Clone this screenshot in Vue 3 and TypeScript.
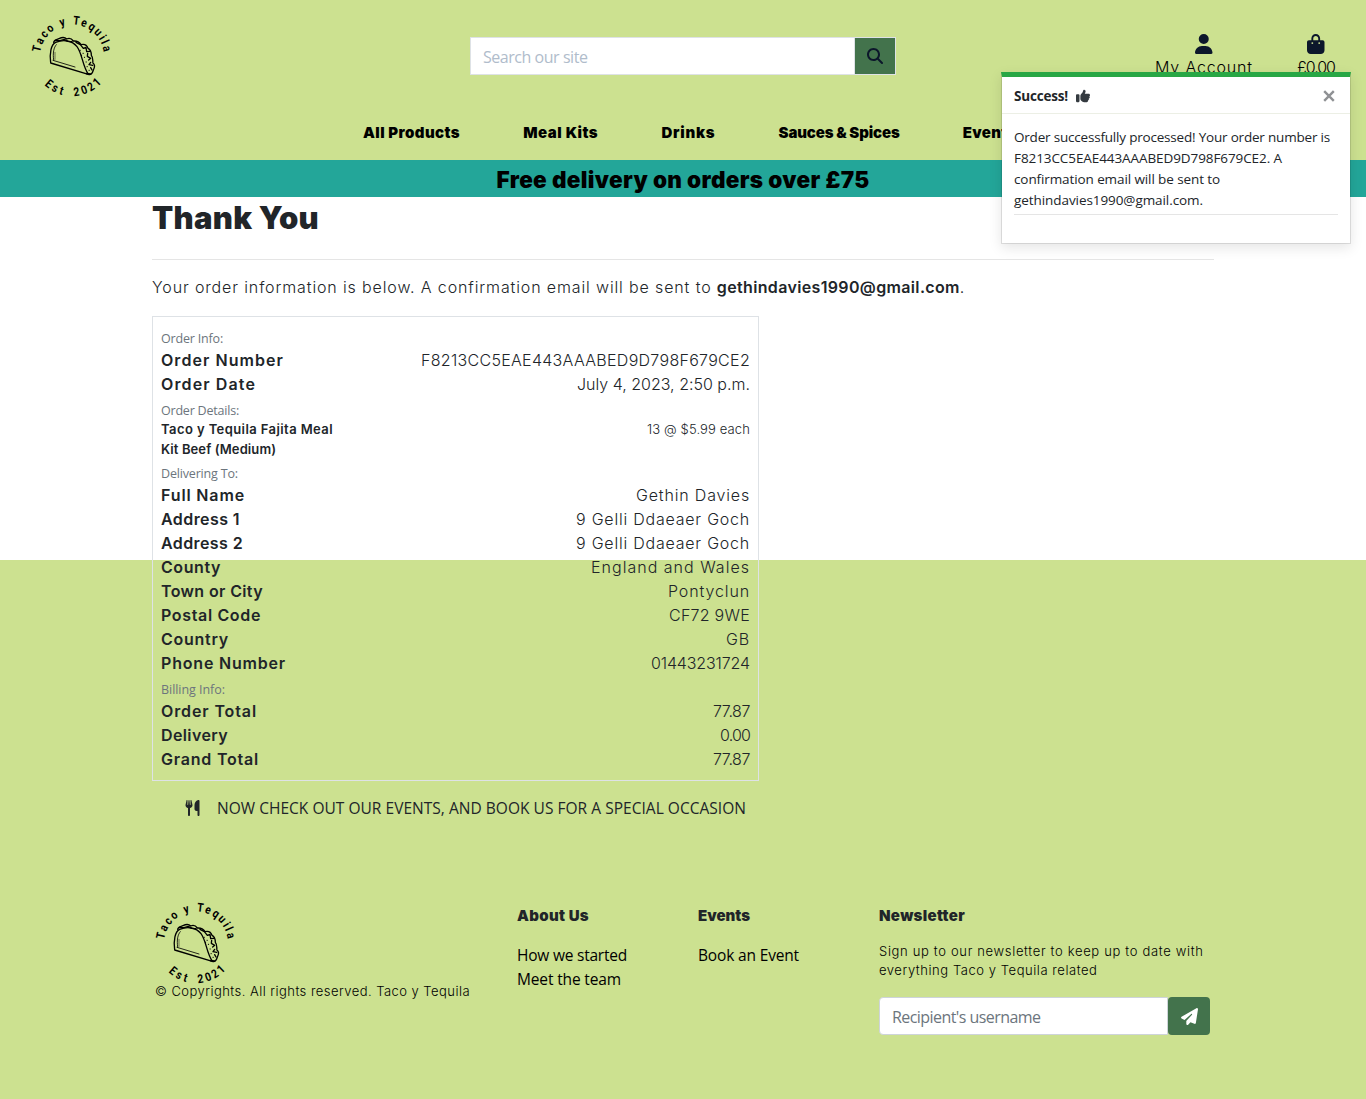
<script setup lang="ts">
import { h } from 'vue'
import type { Directive, VNode } from 'vue'

interface Row { label: string; lw: number; value: string; vw: number }
interface Section { title: string; tw: number; rows: Row[]; item?: boolean }

// Tracks a run of text out to a given measure by adjusting its letter spacing.
const vFit: Directive<HTMLElement, number> = {
  mounted(el, { value }) {
    const natural = el.getBoundingClientRect().width
    const count = (el.textContent ?? '').trim().length
    if (count) el.style.letterSpacing = `${(value - natural) / count}px`
  },
}

const nav = [
  { text: 'All Products', w: 97 },
  { text: 'Meal Kits', w: 75 },
  { text: 'Drinks', w: 54 },
  { text: 'Sauces & Spices', w: 121 },
  { text: 'Events', w: 54 },
]

const toastLines = [
  { text: 'Order successfully processed! Your order number is', w: 316 },
  { text: 'F8213CC5EAE443AAABED9D798F679CE2. A', w: 268 },
  { text: 'confirmation email will be sent to', w: 206 },
  { text: 'gethindavies1990@gmail.com.', w: 189 },
]

const sections: Section[] = [
  {
    title: 'Order Info:', tw: 62,
    rows: [
      { label: 'Order Number', lw: 123, value: 'F8213CC5EAE443AAABED9D798F679CE2', vw: 329 },
      { label: 'Order Date', lw: 95, value: 'July 4, 2023, 2:50 p.m.', vw: 173 },
    ],
  },
  { title: 'Order Details:', tw: 78, rows: [], item: true },
  {
    title: 'Delivering To:', tw: 77,
    rows: [
      { label: 'Full Name', lw: 84, value: 'Gethin Davies', vw: 114 },
      { label: 'Address 1', lw: 79, value: '9 Gelli Ddaeaer Goch', vw: 174 },
      { label: 'Address 2', lw: 82, value: '9 Gelli Ddaeaer Goch', vw: 174 },
      { label: 'County', lw: 60, value: 'England and Wales', vw: 159 },
      { label: 'Town or City', lw: 102, value: 'Pontyclun', vw: 82 },
      { label: 'Postal Code', lw: 100, value: 'CF72 9WE', vw: 81 },
      { label: 'Country', lw: 68, value: 'GB', vw: 24 },
      { label: 'Phone Number', lw: 125, value: '01443231724', vw: 99 },
    ],
  },
  {
    title: 'Billing Info:', tw: 64,
    rows: [
      { label: 'Order Total', lw: 96, value: '77.87', vw: 37 },
      { label: 'Delivery', lw: 67, value: '0.00', vw: 30 },
      { label: 'Grand Total', lw: 98, value: '77.87', vw: 37 },
    ],
  },
]

const ring = (text: string, angles: number[], baseline: number): VNode[] =>
  [...text].map((ch, i) =>
    h('text', { transform: `translate(41 40.5) rotate(${angles[i]}) translate(0 ${baseline}) scale(.85 1)` }, ch))

const stroke = (d: string, width: number): VNode => h('path', { d, 'stroke-width': width })

const Logo = (): VNode =>
  h('svg', { viewBox: '0 0 80 80' }, [
    h('g', { 'font-family': 'Roboto, sans-serif', 'font-size': 12, 'font-weight': 700, 'text-anchor': 'middle' }, [
      ...ring('TacoyTequila', [-77, -64, -51, -38, -16, 7, 20, 34, 47, 58, 66, 77], -32),
      ...ring('Est2021', [40, 28, 17, -7, -20, -32, -44], 39.7),
    ]),
    h('g', {
      transform: 'translate(-11 -11) scale(.33333)', fill: 'none', stroke: '#000',
      'stroke-linecap': 'round', 'stroke-linejoin': 'round',
    }, [
      stroke('M92 174 C88 145 93 118 107 112 C130 103 156 106 171 125 C187 146 187 182 205 208 Z', 4),
      stroke('M101 165 C98 145 101 127 109 119 M99 166 L165 186', 2.5),
      stroke('M105 163 L105 142', 1.5),
      stroke('M101 112 C102 103 112 104 117 101 C127 96 135 97 140 102 C149 98 155 101 160 108 C172 107 178 111 183 119 C194 116 201 121 204 130 C213 134 214 143 214 151 C221 159 217 167 219 174 C229 183 221 191 220 195 C217 207 211 211 205 208', 4),
      stroke('M106 107 L120 107 L133 103 L143 109 L156 110 M168 112 L181 119 L190 130 L198 127 L200 140 L210 139 M203 145 L202 154 L212 160 L206 165 M212 172 L207 179 L218 181 M212 188 L216 195', 4),
      stroke('M180 136 h1 M189 145 h1 M193 157 h1 M198 171 h1 M201 185 h1 M207 196 h1 M184 151 h1', 3),
      stroke('M200 206 L212 207', 5),
    ]),
  ])
</script>

<template>
  <div class="page">
    <header class="header">
      <Logo class="logo" />
      <form class="search" @submit.prevent>
        <input type="text" placeholder="Search our site" />
        <button type="submit" aria-label="Search">
          <svg width="16" height="16" viewBox="0 0 512 512"><path d="M416 208c0 45.900-14.900 88.300-40 122.700L502.600 457.400c12.500 12.500 12.500 32.800 0 45.300s-32.800 12.500-45.300 0L330.700 376c-34.400 25.200-76.800 40-122.700 40C93.100 416 0 322.900 0 208S93.100 0 208 0S416 93.100 416 208zM208 352a144 144 0 1 0 0-288 144 144 0 1 0 0 288z" /></svg>
        </button>
      </form>
      <div class="account">
        <svg width="17.500" height="20" viewBox="0 0 448 512"><path d="M224 256A128 128 0 1 0 224 0a128 128 0 1 0 0 256zm-45.700 48C79.800 304 0 383.800 0 482.300C0 498.700 13.300 512 29.700 512H418.300c16.400 0 29.700-13.300 29.700-29.700C448 383.800 368.200 304 269.700 304H178.300z" /></svg>
        <span v-fit="98" class="fit">My Account</span>
      </div>
      <div class="bag">
        <svg width="17.500" height="20" viewBox="0 0 448 512"><path d="M160 112c0-35.300 28.700-64 64-64s64 28.700 64 64v48H160V112zm-48 48H48c-26.500 0-48 21.500-48 48V416c0 53 43 96 96 96H352c53 0 96-43 96-96V208c0-26.500-21.500-48-48-48H336V112C336 50.100 285.900 0 224 0S112 50.100 112 112v48zm24 48a24 24 0 1 1 0 48 24 24 0 1 1 0-48zm152 24a24 24 0 1 1 48 0 24 24 0 1 1 -48 0z" /></svg>
        <span v-fit="38" class="fit">£0.00</span>
      </div>
    </header>
    <nav class="nav">
      <a v-for="n in nav" :key="n.text" v-fit="n.w" class="fit">{{ n.text }}</a>
    </nav>
    <div class="banner"><span v-fit="373" class="fit">Free delivery on orders over £75</span></div>

    <main class="content">
      <h2><span v-fit="167" class="fit">Thank You</span></h2>
      <hr />
      <p class="intro"><span v-fit="564" class="fit">Your order information is below. A confirmation email will be sent to&nbsp;</span><strong v-fit="243" class="fit">gethindavies1990@gmail.com</strong>.</p>

      <section class="order">
        <div v-for="s in sections" :key="s.title">
          <div class="label"><span v-fit="s.tw" class="fit">{{ s.title }}</span></div>
          <div v-if="s.item" class="item">
            <div class="item-name">
              <strong v-fit="172" class="fit">Taco y Tequila Fajita Meal</strong>
              <strong v-fit="115" class="fit">Kit Beef (Medium)</strong>
            </div>
            <span v-fit="103" class="fit">13 @ $5.99 each</span>
          </div>
          <div v-for="r in s.rows" :key="r.label" class="row">
            <strong v-fit="r.lw" class="fit">{{ r.label }}</strong>
            <span v-fit="r.vw" class="fit">{{ r.value }}</span>
          </div>
        </div>
      </section>

      <a class="events">
        <svg width="15" height="16" viewBox="0 0 448 512"><path d="M416 0C400 0 288 32 288 176V288c0 35.300 28.700 64 64 64h32V480c0 17.700 14.300 32 32 32s32-14.300 32-32V352 240 32c0-17.700-14.300-32-32-32zM64 16C64 7.800 57.900 1 49.700 .1S34.200 4.600 32.400 12.500L2.100 148.800C.7 155.100 0 161.500 0 167.900c0 45.900 35.100 83.600 80 87.700V480c0 17.700 14.300 32 32 32s32-14.300 32-32V255.600c44.900-4.100 80-41.800 80-87.700c0-6.400-.7-12.800-2.100-19.100L191.600 12.500c-1.800-8-9.300-13.300-17.400-12.400S160 7.800 160 16V150.200c0 5.400-4.400 9.800-9.800 9.800c-5.100 0-9.300-3.900-9.800-9L127.900 14.600C127.200 6.300 120.300 0 112 0s-15.200 6.300-15.900 14.600L83.700 151c-.5 5.100-4.700 9-9.800 9c-5.400 0-9.800-4.400-9.800-9.800V16z" /></svg>
        <span v-fit="529" class="fit">NOW CHECK OUT OUR EVENTS, AND BOOK US FOR A SPECIAL OCCASION</span>
      </a>
    </main>

    <footer class="footer">
      <div class="brand">
        <Logo class="logo" />
        <span v-fit="315" class="fit copy">© Copyrights. All rights reserved. Taco y Tequila</span>
      </div>
      <div class="links">
        <h6 v-fit="72" class="fit">About Us</h6>
        <a v-fit="110" class="fit">How we started</a>
        <a v-fit="104" class="fit">Meet the team</a>
      </div>
      <div class="links">
        <h6 v-fit="52" class="fit">Events</h6>
        <a v-fit="101" class="fit">Book an Event</a>
      </div>
      <div class="links">
        <h6 v-fit="86" class="fit">Newsletter</h6>
        <div class="blurb">
          <span v-fit="324.500" class="fit">Sign up to our newsletter to keep up to date with</span>
          <span v-fit="218.500" class="fit">everything Taco y Tequila related</span>
        </div>
        <form class="subscribe" @submit.prevent>
          <input type="text" placeholder="Recipient's username" />
          <button type="submit" aria-label="Subscribe">
            <svg width="17" height="17" viewBox="0 0 512 512"><path d="M498.100 5.600c10.100 7 15.400 19.100 13.500 31.200l-64 416c-1.500 9.700-7.400 18.200-16 23s-18.900 5.400-28 1.600L284 427.700l-68.500 74.100c-8.900 9.700-22.900 12.900-35.200 8.100S160 493.200 160 480V396.400c0-4 1.500-7.800 4.200-10.700L331.800 202.800c5.800-6.300 5.600-16-.4-22s-15.700-6.400-22-.7L106 360.800 17.700 316.600C7.100 311.300 .3 300.700 0 288.900s5.900-22.800 16.100-28.700l448-256c10.700-6.100 23.900-5.500 34 1.400z" /></svg>
          </button>
        </form>
      </div>
    </footer>

    <aside class="toast">
      <div class="toast-head">
        <strong v-fit="54" class="fit">Success!</strong>
        <svg width="14" height="14" viewBox="0 0 512 512"><path d="M313.400 32.900c26 5.200 42.900 30.500 37.700 56.500l-2.300 11.400c-5.300 26.700-15.100 52.100-28.800 75.200H464c26.500 0 48 21.500 48 48c0 18.500-10.500 34.600-25.900 42.600C497 275.400 504 288.900 504 304c0 23.400-16.800 42.900-38.900 47.100c4.400 7.300 6.900 15.800 6.900 24.900c0 21.300-13.900 39.400-33.100 45.600c.7 3.300 1.100 6.800 1.100 10.400c0 26.500-21.500 48-48 48H294.500c-19 0-37.500-5.600-53.300-16.100l-38.500-25.700C176 420.400 160 390.400 160 358.300V320 272 247.100c0-29.200 13.300-56.700 36-75l7.400-5.900c26.500-21.200 44.600-51 51.200-84.200l2.300-11.400c5.200-26 30.500-42.900 56.500-37.700zM32 192H96c17.700 0 32 14.300 32 32V448c0 17.700-14.300 32-32 32H32c-17.700 0-32-14.300-32-32V224c0-17.700 14.300-32 32-32z" /></svg>
        <button class="close" aria-label="Close"><svg width="12" height="12" viewBox="0 0 12 12"><path d="M1.200 1.200 L10.800 10.800 M10.800 1.200 L1.200 10.800" /></svg></button>
      </div>
      <div class="toast-body">
        <div v-for="l in toastLines" :key="l.text"><span v-fit="l.w" class="fit">{{ l.text }}</span></div>
        <hr />
      </div>
    </aside>
  </div>
</template>

<style>
body { margin: 0; background: #cce190; }
</style>

<style scoped>
* { box-sizing: border-box; }
.page {
  position: relative; width: 1366px; height: 1099px; overflow: hidden;
  background: linear-gradient(#fff 560px, #cce190 560px);
  color: #212529; font: 300 16px/24px Inter, sans-serif;
}
strong { font-weight: 600; }
.fit { display: inline-block; width: max-content; white-space: nowrap; }
.logo { display: block; width: 80px; height: 80px; flex: none; overflow: visible; }
svg { flex: none; }
input { min-width: 0; font: 400 16px "Open Sans", sans-serif; outline: none; background: #fff; border: 1px solid #ced4da; padding: 1px 12px 0; }
button { border: 0; padding: 0; display: flex; align-items: center; justify-content: center; }

.header { height: 112px; padding-left: 31px; background: #cce190; display: flex; align-items: flex-start; }
.header > .logo { margin-top: 16px; }
.search { display: flex; width: 426px; height: 38px; margin: 37px 0 0 359px; border: 1px solid #dee2e6; }
.search input { flex: 1; border: 0; border-right: 1px solid #dee2e6; letter-spacing: -.46px; padding-top: 2px; }
.search input::placeholder { color: #b0bccb; opacity: 1; }
.search button { width: 40px; background: #43734c; fill: #0c172b; }
.account, .bag { display: flex; flex-direction: column; align-items: center; margin-top: 34px; fill: #0c172b; color: #000; }
.account { width: 98px; margin-left: 259px; }
.bag { width: 38px; margin-left: 44px; }
.account .fit, .bag .fit { margin-top: 1px; }
.nav { height: 48px; padding: 9px 0 0 363px; display: flex; gap: 63.200px; background: #cce190; color: #000; font-weight: 900; font-size: 15px; white-space: nowrap; }
.nav .fit { flex: none; }
.banner { height: 37px; padding-top: 1px; background: #23a699; color: #000; text-align: center; font-size: 22.500px; font-weight: 900; line-height: 38px; }

.content { width: 1062px; margin-left: 152px; height: 706px; }
h2 { margin: 0; height: 62px; font-size: 31px; line-height: 42px; font-weight: 900; }
hr { margin: 0; border: 0; border-top: 1px solid #e5e5e5; }
.intro { margin: 15px 0 17px; height: 24px; display: flex; white-space: pre; }
.order { width: 607px; height: 465px; border: 1px solid #dee2e6; padding: 7px 8px; }
.row { display: flex; justify-content: space-between; height: 24px; }
.label { height: 24px; line-height: 29px; font-family: "Open Sans", sans-serif; font-weight: 400; font-size: 12.500px; color: #6c757d; }
.item { height: 39px; display: flex; justify-content: space-between; font-size: 13px; line-height: 19.500px; }
.item-name { display: flex; flex-direction: column; }
.events { display: flex; align-items: center; gap: 17px; height: 24px; margin: 15px 0 0 33px; font-family: "Open Sans", sans-serif; font-weight: 400; font-size: 15.500px; fill: #212529; }

.footer { display: grid; grid-template-columns: 362px 181px 181px 331px; padding-left: 155px; color: #000; }
.brand { display: flex; flex-direction: column; }
.copy { font-size: 13px; line-height: 17px; }
.links { display: flex; flex-direction: column; margin-top: 3px; font-family: "Open Sans", sans-serif; font-weight: 400; font-size: 15.500px; }
h6 { margin: 0 0 17px; height: 20px; line-height: 20px; font-family: Inter, sans-serif; font-size: 15px; font-weight: 900; color: #212529; }
.blurb { display: flex; flex-direction: column; margin-top: -1px; font: 300 13px/19px Inter, sans-serif; }
.subscribe { display: flex; height: 38px; width: 331px; margin-top: 17px; }
.subscribe input { flex: 1; border-radius: 4px 0 0 4px; letter-spacing: -.56px; }
.subscribe input::placeholder { color: #6c757d; opacity: 1; }
.subscribe button { width: 42px; background: #43734c; border-radius: 4px; fill: #fff; }

.toast {
  position: absolute; left: 1001px; top: 72px; width: 350px; height: 172px; background: #fff;
  background-clip: padding-box; border: 1px solid rgba(0, 0, 0, .1); border-top: 5px solid #28a745;
  box-shadow: 0 4px 12px rgba(0, 0, 0, .1); font: 400 13.500px/21px "Open Sans", sans-serif;
}
.toast-head { height: 37px; padding: 2px 15px 0 12px; display: flex; align-items: center; border-bottom: 1px solid #ecefe5; fill: #343a40; }
.toast-head strong { font-weight: 700; }
.toast-head svg { margin-left: 8px; }
.close { margin-left: auto; background: none; }
.close svg { stroke: #8f9194; stroke-width: 2.400; fill: none; }
.toast-body { padding: 13px 12px; }
.toast-body div { height: 21px; }
.toast-body hr { margin-top: 3px; }
</style>
